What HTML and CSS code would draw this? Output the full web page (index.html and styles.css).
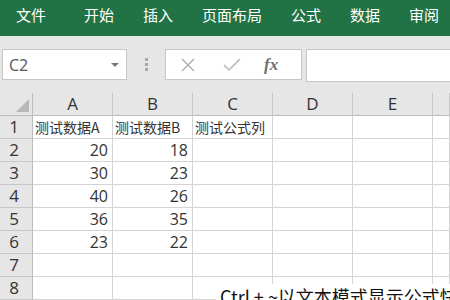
FILE: index.html
```html
<!DOCTYPE html>
<html lang="zh-CN">
<head>
    <meta charset="UTF-8">
    <title>Excel</title>
    <link rel="stylesheet" href="styles.css">
</head>
<body>
    <div class="ribbon">
        <span class="tab first">文件</span>
        <span class="tab">开始</span>
        <span class="tab">插入</span>
        <span class="tab">页面布局</span>
        <span class="tab">公式</span>
        <span class="tab">数据</span>
        <span class="tab">审阅</span>
    </div>

    <div class="toolbar">
        <div class="namebox">
            <span>C2</span>
            <span class="caret"></span>
        </div>
        <div class="grip"><i></i><i></i><i></i></div>
        <div class="fbuttons">
            <svg class="icon" width="16" height="16" viewBox="0 0 16 16">
                <path d="M2 2 L14 14 M14 2 L2 14" stroke="#b3b3b3" stroke-width="1.6" fill="none"/>
            </svg>
            <svg class="icon" width="18" height="16" viewBox="0 0 18 16">
                <path d="M1 8 L6 13 L17 2" stroke="#c4c4c4" stroke-width="1.8" fill="none"/>
            </svg>
            <span class="fx">fx</span>
        </div>
        <div class="finput"></div>
    </div>

    <div class="sheet">
        <div class="corner"><span class="tri"></span></div>
        <div class="colhead">A</div>
        <div class="colhead">B</div>
        <div class="colhead">C</div>
        <div class="colhead">D</div>
        <div class="colhead">E</div>
        <div class="colhead"></div>

        <div class="rowhead">1</div>
        <div class="cell text">测试数据A</div>
        <div class="cell text">测试数据B</div>
        <div class="cell text">测试公式列</div>
        <div class="cell"></div><div class="cell"></div><div class="cell"></div>

        <div class="rowhead">2</div>
        <div class="cell num">20</div><div class="cell num">18</div>
        <div class="cell"></div><div class="cell"></div><div class="cell"></div><div class="cell"></div>

        <div class="rowhead">3</div>
        <div class="cell num">30</div><div class="cell num">23</div>
        <div class="cell"></div><div class="cell"></div><div class="cell"></div><div class="cell"></div>

        <div class="rowhead">4</div>
        <div class="cell num">40</div><div class="cell num">26</div>
        <div class="cell"></div><div class="cell"></div><div class="cell"></div><div class="cell"></div>

        <div class="rowhead">5</div>
        <div class="cell num">36</div><div class="cell num">35</div>
        <div class="cell"></div><div class="cell"></div><div class="cell"></div><div class="cell"></div>

        <div class="rowhead">6</div>
        <div class="cell num">23</div><div class="cell num">22</div>
        <div class="cell"></div><div class="cell"></div><div class="cell"></div><div class="cell"></div>

        <div class="rowhead">7</div>
        <div class="cell"></div><div class="cell"></div><div class="cell"></div>
        <div class="cell"></div><div class="cell"></div><div class="cell"></div>

        <div class="rowhead">8</div>
        <div class="cell"></div><div class="cell"></div><div class="cell"></div>
        <div class="cell"></div><div class="cell"></div><div class="cell"></div>
    </div>

    <div class="caption">Ctrl + ~以文本模式显示公式快捷键</div>
</body>
</html>
```

FILE: styles.css
```css
body {
    margin: 0;
    width: 450px;
    height: 300px;
    overflow: hidden;
    position: relative;
    font-family: "Noto Sans CJK SC", sans-serif;
    background: white;
}
.ribbon {
    height: 36px;
    background: #217346;
    display: flex;
    align-items: center;
    padding-left: 16px;
    gap: 29px;
    border-bottom: 2px solid #dfe8e3;
}
.tab {
    color: white;
    font-size: 15px;
    line-height: 1;
    margin-top: -7px;
}
.tab.first {
    margin-right: 9px;
}
.toolbar {
    height: 55px;
    background: #e6e6e6;
    display: flex;
    align-items: flex-start;
    padding-top: 11px;
    box-sizing: border-box;
}
.namebox {
    margin-left: 2px;
    width: 125px;
    height: 31px;
    box-sizing: border-box;
    background: white;
    border: 1px solid #c6c6c6;
    display: flex;
    align-items: center;
    justify-content: space-between;
    padding: 0 7px 0 6px;
    font-family: "Open Sans", sans-serif;
    font-size: 16px;
    color: #555;
}
.caret {
    width: 0;
    height: 0;
    border-left: 4px solid transparent;
    border-right: 4px solid transparent;
    border-top: 4px solid #777;
}
.grip {
    width: 38px;
    height: 31px;
    display: flex;
    flex-direction: column;
    align-items: center;
    justify-content: center;
    gap: 2px;
}
.grip i {
    width: 3px;
    height: 3px;
    background: #a8a8a8;
}
.fbuttons {
    width: 137px;
    height: 31px;
    box-sizing: border-box;
    background: white;
    border: 1px solid #c6c6c6;
    display: flex;
    align-items: center;
    padding-left: 14px;
    gap: 27px;
}
.fx {
    font-family: "Liberation Serif", serif;
    font-style: italic;
    font-weight: bold;
    font-size: 17px;
    color: #707070;
    margin-left: -4px;
}
.finput {
    margin-left: 4px;
    flex: 1;
    height: 31px;
    background: white;
    border: 1px solid #c6c6c6;
    border-right: none;
}
.sheet {
    display: grid;
    grid-template-columns: 33px repeat(5, 80px) 1fr;
    grid-auto-rows: 23px;
}
.corner, .colhead, .rowhead, .cell {
    box-sizing: border-box;
    border-right: 1px solid #d4d4d4;
    border-bottom: 1px solid #d4d4d4;
}
.corner {
    background: #e6e6e6;
    border-color: #bdbdbd;
    position: relative;
}
.tri {
    position: absolute;
    right: 3px;
    bottom: 3px;
    width: 0;
    height: 0;
    border-left: 13px solid transparent;
    border-bottom: 13px solid #b8b8b8;
}
.colhead {
    background: #e6e6e6;
    border-right-color: #c8c8c8;
    border-bottom-color: #bdbdbd;
    text-align: center;
    font-family: "Open Sans", sans-serif;
    font-size: 17px;
    line-height: 22px;
    color: #333;
}
.rowhead {
    background: #e6e6e6;
    border-right-color: #bdbdbd;
    border-bottom-color: #c8c8c8;
    text-align: center;
    font-family: "Open Sans", sans-serif;
    font-size: 17px;
    line-height: 22px;
    color: #333;
    padding-right: 4px;
}
.cell {
    font-size: 14px;
    line-height: 22px;
    color: #333;
    white-space: nowrap;
}
.text {
    padding-left: 2px;
    overflow: hidden;
}
.num {
    text-align: right;
    padding-right: 4px;
    font-family: "Open Sans", sans-serif;
    font-size: 16px;
}
.caption {
    position: absolute;
    left: 216px;
    top: 284px;
    padding: 0 4px;
    background: white;
    white-space: nowrap;
    font-size: 18px;
    line-height: 24px;
    color: #111;
}
```
